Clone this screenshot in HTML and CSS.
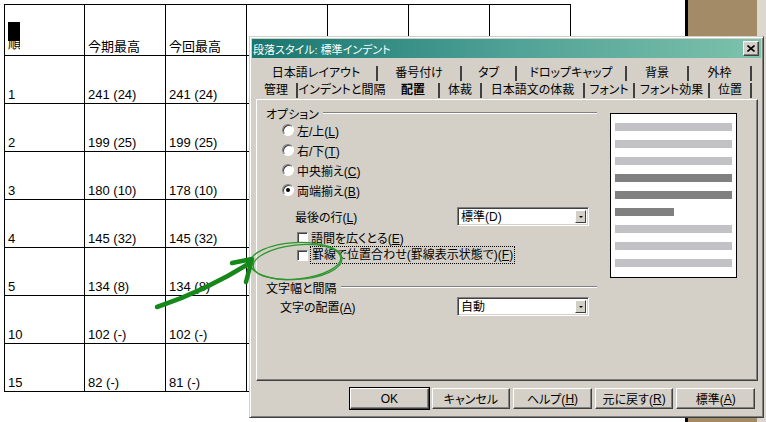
FILE: index.html
```html
<!DOCTYPE html>
<html lang="ja">
<head>
    <meta charset="UTF-8">
    <title>段落スタイル: 標準インデント</title>
    <link rel="stylesheet" href="styles.css">
</head>
<body>
    <div class="screen">
        <div class="doc">
            <table class="grid">
                <colgroup>
                    <col class="first"><col><col><col><col><col><col>
                </colgroup>
                <tr class="head">
                    <td><span class="sel">順</span></td>
                    <td>今期最高</td>
                    <td>今回最高</td>
                    <td></td><td></td><td></td><td></td>
                </tr>
                <tr><td>1</td><td>241 (24)</td><td>241 (24)</td><td></td><td></td><td></td><td></td></tr>
                <tr><td>2</td><td>199 (25)</td><td>199 (25)</td><td></td><td></td><td></td><td></td></tr>
                <tr><td>3</td><td>180 (10)</td><td>178 (10)</td><td></td><td></td><td></td><td></td></tr>
                <tr><td>4</td><td>145 (32)</td><td>145 (32)</td><td></td><td></td><td></td><td></td></tr>
                <tr><td>5</td><td>134 (8)</td><td>134 (8)</td><td></td><td></td><td></td><td></td></tr>
                <tr><td>10</td><td>102 (-)</td><td>102 (-)</td><td></td><td></td><td></td><td></td></tr>
                <tr><td>15</td><td>82 (-)</td><td>81 (-)</td><td></td><td></td><td></td><td></td></tr>
            </table>
        </div>
        <div class="edge"></div>
        <div class="desk"></div>
        <div class="strip"></div>
    </div>

    <div class="dialog">
        <div class="titlebar">
            <span class="title">段落スタイル: 標準インデント</span>
            <span class="close">
                <svg width="8" height="7" viewBox="0 0 8 7"><path d="M0.5 0.5 L7.5 6.5 M7.5 0.5 L0.5 6.5" stroke="#000" stroke-width="1.6"/></svg>
            </span>
        </div>

        <div class="tabs">
            <div class="tabrow">
                <span class="tab w122">日本語レイアウト</span>
                <span class="tab w84">番号付け</span>
                <span class="tab w55">タブ</span>
                <span class="tab w110">ドロップキャップ</span>
                <span class="tab w62">背景</span>
                <span class="tab w63">外枠</span>
            </div>
            <div class="tabrow">
                <span class="tab w42">管理</span>
                <span class="tab w90 bare">インデントと間隔</span>
                <span class="tab w52 on">配置</span>
                <span class="tab w42">体裁</span>
                <span class="tab w103">日本語文の体裁</span>
                <span class="tab w50">フォント</span>
                <span class="tab w75">フォント効果</span>
                <span class="tab w42">位置</span>
            </div>
        </div>

        <div class="panel">
            <div class="opts">
                <div class="group">
                    <span>オプション</span><span class="rule"></span>
                </div>
                <div class="radio-row"><span class="radio"></span><span>左/上(<u>L</u>)</span></div>
                <div class="radio-row"><span class="radio"></span><span>右/下(<u>T</u>)</span></div>
                <div class="radio-row"><span class="radio"></span><span>中央揃え(<u>C</u>)</span></div>
                <div class="radio-row"><span class="radio on"></span><span>両端揃え(<u>B</u>)</span></div>

                <div class="field last">
                    <span class="label">最後の行(<u>L</u>)</span>
                    <span class="select"><span class="value">標準(D)</span><span class="drop"></span></span>
                </div>

                <div class="check-row first"><span class="box"></span><span>語間を広くとる(<u>E</u>)</span></div>
                <div class="check-row"><span class="box"></span><span class="focus">罫線で位置合わせ(罫線表示状態で)(<u>F</u>)</span></div>

                <div class="group second">
                    <span>文字幅と間隔</span><span class="rule"></span>
                </div>
                <div class="field align">
                    <span class="label">文字の配置(<u>A</u>)</span>
                    <span class="select"><span class="value">自動</span><span class="drop"></span></span>
                </div>
            </div>

            <div class="preview">
                <div class="bar"></div>
                <div class="bar"></div>
                <div class="bar"></div>
                <div class="bar dark"></div>
                <div class="bar dark"></div>
                <div class="bar dark short"></div>
                <div class="bar"></div>
                <div class="bar"></div>
                <div class="bar"></div>
            </div>
        </div>

        <div class="actions">
            <span class="btn default">OK</span>
            <span class="btn">キャンセル</span>
            <span class="btn">ヘルプ(<u>H</u>)</span>
            <span class="btn">元に戻す(<u>R</u>)</span>
            <span class="btn">標準(<u>A</u>)</span>
        </div>
    </div>

    <!-- hand-drawn annotation on top of the screenshot -->
    <svg class="marks" width="766" height="422" viewBox="0 0 766 422">
        <g fill="none" stroke="#2b962b" stroke-width="1.3">
            <ellipse cx="296" cy="261" rx="46" ry="18.5" transform="rotate(-3 296 261)"/>
            <ellipse cx="297" cy="262" rx="44" ry="17" transform="rotate(-6 297 262)"/>
        </g>
        <g fill="none" stroke="#16881a" stroke-width="4.5" stroke-linecap="round" stroke-linejoin="round">
            <path d="M157 307 Q205 291 250 263"/>
            <path d="M232 263 L252 259 L246 282"/>
        </g>
    </svg>
</body>
</html>
```

FILE: styles.css
```css
* {
    box-sizing: border-box;
}

body {
    margin: 0;
    width: 766px;
    height: 422px;
    overflow: hidden;
    position: relative;
    background: #fff;
}

.screen {
    display: flex;
    height: 422px;
}

.doc {
    width: 685px;
    background: #fff;
    padding: 4px 0 0 4px;
}

.edge { width: 3px; background: #000; }
.desk { width: 69px; background: #a48b68; }
.strip { flex: 1; background: #dcd8d0; }

.grid {
    border-collapse: collapse;
    table-layout: fixed;
    width: 567px;
    font: 13px "Liberation Sans", "Noto Sans CJK JP", sans-serif;
}

.grid col { width: 81px; }
.grid col.first { width: 80px; }

.grid td {
    border: 1px solid #000;
    height: 48px;
    padding: 0 2px 1px 3px;
    vertical-align: bottom;
    line-height: 14px;
    white-space: nowrap;
    overflow: hidden;
}

.grid .head td { height: 51px; }

.sel {
    display: inline-block;
    width: 12px;
    padding-top: 15px;
    line-height: 14px;
    overflow: hidden;
    background: linear-gradient(#000 0 19px, transparent 19px);
}

/* dialog window */
.dialog {
    position: absolute;
    left: 249px;
    top: 36px;
    width: 515px;
    height: 382px;
    padding: 2px;
    background: #d4d0c8;
    border: 1px solid;
    border-color: #d4d0c8 #404040 #404040 #d4d0c8;
    box-shadow: inset 1px 1px #fff, inset -1px -1px #808080;
    font: 12px "Liberation Sans", "Noto Sans CJK JP", sans-serif;
    font-feature-settings: "palt";
    color: #000;
    display: flex;
    flex-direction: column;
    align-items: flex-start;
}

.titlebar {
    align-self: stretch;
    height: 19px;
    padding: 0 2px 0 1px;
    display: flex;
    align-items: center;
    color: #fff;
    font-size: 11px;
    background: linear-gradient(to right, #17766f, #4fa196 50%, #7dc2ab);
}

.title { flex: 1; }

.close {
    width: 16px;
    height: 15px;
    background: #d4d0c8;
    border: 1px solid;
    border-color: #fff #404040 #404040 #fff;
    box-shadow: inset -1px -1px #808080;
    display: flex;
    align-items: center;
    justify-content: center;
}

.tabs { margin: 7px 0 0 4px; }

.tabrow {
    display: flex;
    align-items: center;
    height: 17px;
}

.tab {
    height: 15px;
    line-height: 15px;
    text-align: center;
    white-space: nowrap;
    border-right: 2px solid #404040;
}

.tab.bare { border-right-color: transparent; }
.tab.on { font-weight: bold; }

.w42 { width: 42px; }
.w50 { width: 50px; }
.w52 { width: 52px; }
.w55 { width: 55px; }
.w62 { width: 62px; }
.w63 { width: 63px; }
.w75 { width: 75px; }
.w84 { width: 84px; }
.w90 { width: 90px; }
.w103 { width: 103px; }
.w110 { width: 110px; }
.w122 { width: 122px; }

.panel {
    margin-left: 4px;
    width: 502px;
    height: 282px;
    border: 1px solid;
    border-color: #fff #404040 #404040 #fff;
    box-shadow: inset -1px -1px #808080;
    display: flex;
    align-items: flex-start;
}

.opts {
    width: 342px;
    padding: 6px 0 0 9px;
}

.group {
    display: flex;
    align-items: center;
    height: 14px;
}

.group.second { margin-top: 16px; }

.rule {
    flex: 1;
    margin: 0 2px 0 4px;
    border-top: 1px solid #808080;
    border-bottom: 1px solid #fff;
}

.radio-row {
    display: flex;
    align-items: center;
    gap: 3px;
    height: 20px;
    margin-left: 16px;
}

.radio {
    width: 12px;
    height: 12px;
    border-radius: 50%;
    background: #fff;
    border: 1px solid;
    border-color: #808080 #fff #fff #808080;
    box-shadow: inset 1px 1px #404040;
    display: flex;
    align-items: center;
    justify-content: center;
}

.radio.on::after {
    content: "";
    width: 4px;
    height: 4px;
    border-radius: 50%;
    background: #000;
}

.field {
    display: flex;
    align-items: center;
    height: 19px;
}

.field .label { flex: 1; }
.field.last { margin-top: 7px; padding-left: 29px; }
.field.align { margin-top: 3px; padding-left: 14px; }

.select {
    width: 132px;
    height: 19px;
    margin-right: 10px;
    padding: 2px;
    background: #fff;
    border: 1px solid;
    border-color: #808080 #fff #fff #808080;
    box-shadow: inset 1px 1px #404040, inset -1px -1px #d4d0c8;
    display: flex;
}

.select .value {
    flex: 1;
    line-height: 15px;
    padding-left: 1px;
}

.drop {
    width: 11px;
    background: #d4d0c8;
    border: 1px solid;
    border-color: #fff #404040 #404040 #fff;
    display: flex;
    align-items: center;
    justify-content: center;
}

.drop::after {
    content: "";
    border-left: 2px solid transparent;
    border-right: 2px solid transparent;
    border-top: 2px solid #000;
}

.check-row {
    display: flex;
    align-items: center;
    gap: 3px;
    height: 18px;
    margin-left: 31px;
}

.check-row.first { margin-top: 2px; }

.box {
    width: 11px;
    height: 11px;
    background: #fff;
    border: 1px solid;
    border-color: #808080 #fff #fff #808080;
    box-shadow: inset 1px 1px #404040;
}

.focus {
    outline: 1px dotted #000;
    padding: 0 1px;
    line-height: 16px;
    white-space: nowrap;
}

.preview {
    margin: 13px 0 0 11px;
    width: 127px;
    height: 165px;
    padding: 9px 4px 0;
    border: 1px solid #000;
    background: #fff;
    display: flex;
    flex-direction: column;
    gap: 9px;
}

.bar { height: 8px; background: #c2c2c6; }
.bar.dark { background: #808080; }
.bar.short { width: 59px; }

.actions {
    margin: 7px 0 0 98px;
    width: 405px;
    display: grid;
    grid-template-columns: repeat(5, 1fr);
    gap: 3px;
}

.btn {
    height: 21px;
    border: 1px solid;
    border-color: #fff #404040 #404040 #fff;
    box-shadow: inset -1px -1px #808080;
    display: flex;
    align-items: center;
    justify-content: center;
    white-space: nowrap;
}

.btn.default {
    box-shadow: 0 0 0 1px #000, inset -1px -1px #808080;
}

.marks {
    position: absolute;
    left: 0;
    top: 0;
    pointer-events: none;
}
```
